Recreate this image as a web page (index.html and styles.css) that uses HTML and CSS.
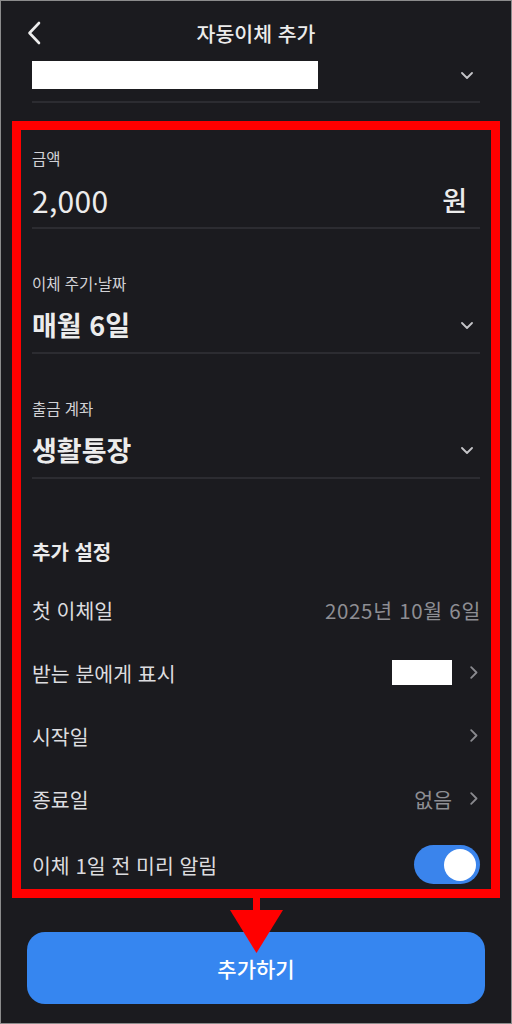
FILE: index.html
```html
<!DOCTYPE html>
<html lang="ko">
<head>
<meta charset="utf-8">
<title>자동이체 추가</title>
<link rel="stylesheet" href="styles.css">
</head>
<body>
<div class="screen">
  <header class="topbar">
    <svg class="back" viewBox="0 0 14 24" width="14" height="24"><path d="M12 2 L2.5 12 L12 22" fill="none" stroke="#ececec" stroke-width="2.6" stroke-linecap="round" stroke-linejoin="round"/></svg>
    <h1 class="title">자동이체 추가</h1>
    <span></span>
  </header>

  <div class="account">
    <div class="account-row">
      <span class="mask mask-wide"></span>
      <svg class="chev-down" viewBox="0 0 12 7" width="12" height="7"><path d="M1 1 L6 6 L11 1" fill="none" stroke="#c4c4c8" stroke-width="1.8" stroke-linecap="round" stroke-linejoin="round"/></svg>
    </div>
    <div class="divider"></div>
  </div>

  <section class="highlight">
    <div class="field field-first">
      <div class="label">금액</div>
      <div class="value-row">
        <span class="amount">2,000</span>
        <span class="unit">원</span>
      </div>
      <div class="divider"></div>
    </div>

    <div class="field">
      <div class="label">이체 주기·날짜</div>
      <div class="value-row">
        <span class="value">매월 6일</span>
        <svg class="chev-down" viewBox="0 0 12 7" width="12" height="7"><path d="M1 1 L6 6 L11 1" fill="none" stroke="#c4c4c8" stroke-width="1.8" stroke-linecap="round" stroke-linejoin="round"/></svg>
      </div>
      <div class="divider"></div>
    </div>

    <div class="field">
      <div class="label">출금 계좌</div>
      <div class="value-row">
        <span class="value">생활통장</span>
        <svg class="chev-down" viewBox="0 0 12 7" width="12" height="7"><path d="M1 1 L6 6 L11 1" fill="none" stroke="#c4c4c8" stroke-width="1.8" stroke-linecap="round" stroke-linejoin="round"/></svg>
      </div>
      <div class="divider"></div>
    </div>

    <h2 class="section-title">추가 설정</h2>

    <ul class="rows">
      <li class="row">
        <span class="row-label">첫 이체일</span>
        <span class="meta meta-date">2025년 10월 6일</span>
      </li>
      <li class="row">
        <span class="row-label">받는 분에게 표시</span>
        <span class="trail">
          <span class="mask mask-small"></span>
          <svg class="chev-right" viewBox="0 0 8 13" width="8" height="13"><path d="M1.2 1.2 L6.5 6.5 L1.2 11.8" fill="none" stroke="#8a8a8f" stroke-width="1.8" stroke-linecap="round" stroke-linejoin="round"/></svg>
        </span>
      </li>
      <li class="row">
        <span class="row-label">시작일</span>
        <span class="trail">
          <svg class="chev-right" viewBox="0 0 8 13" width="8" height="13"><path d="M1.2 1.2 L6.5 6.5 L1.2 11.8" fill="none" stroke="#8a8a8f" stroke-width="1.8" stroke-linecap="round" stroke-linejoin="round"/></svg>
        </span>
      </li>
      <li class="row">
        <span class="row-label">종료일</span>
        <span class="trail">
          <span class="meta">없음</span>
          <svg class="chev-right" viewBox="0 0 8 13" width="8" height="13"><path d="M1.2 1.2 L6.5 6.5 L1.2 11.8" fill="none" stroke="#8a8a8f" stroke-width="1.8" stroke-linecap="round" stroke-linejoin="round"/></svg>
        </span>
      </li>
      <li class="row row-toggle">
        <span class="row-label">이체 1일 전 미리 알림</span>
        <span class="toggle"><span class="knob"></span></span>
      </li>
    </ul>
  </section>

  <button class="primary" type="button">추가하기</button>

  <svg class="arrow" viewBox="0 0 58 60" width="58" height="60">
    <rect x="26" y="0" width="7" height="16" fill="#ff0000"/>
    <polygon points="3,14 56,14 29.5,57" fill="#ff0000"/>
  </svg>
</div>
</body>
</html>
```

FILE: styles.css
```css
* {
  box-sizing: border-box;
}

html, body {
  margin: 0;
  padding: 0;
  background: #1b1b1f;
}

body {
  font-family: "Noto Sans CJK KR", "Noto Sans", sans-serif;
  color: #ececec;
}

.screen {
  position: relative;
  width: 512px;
  height: 1024px;
  border: 1px solid #8c8c8c;
  background: #1b1b1f;
  overflow: hidden;
}

/* header */
.topbar {
  display: grid;
  grid-template-columns: 1fr auto 1fr;
  align-items: center;
  height: 55px;
  padding: 9px 0 0 0;
}

.back {
  display: block;
  margin-left: 26px;
}

.title {
  margin: 0;
  font-size: 20.5px;
  font-weight: 500;
  line-height: 46px;
  color: #ececec;
}

/* account selector */
.account {
  padding: 5px 31px 0 31px;
}

.account-row {
  display: flex;
  align-items: center;
  justify-content: space-between;
  height: 28px;
  padding-right: 7px;
}

.mask {
  display: block;
  background: #ffffff;
}

.mask-wide {
  width: 286px;
  height: 28px;
}

.mask-small {
  width: 60px;
  height: 25px;
}

.divider {
  height: 2px;
  background: #2c2c31;
}

.account .divider {
  margin-top: 12px;
}

/* highlighted block */
.highlight {
  margin: 18px 0 0 11px;
  width: 488px;
  border: 9px solid #ff0000;
  padding: 0 11px;
}

.field {
  padding-top: 45px;
}

.field-first {
  padding-top: 19px;
}

.label {
  font-size: 15.5px;
  line-height: 18px;
  color: #d2d2d6;
}

.value-row {
  display: flex;
  align-items: center;
  justify-content: space-between;
  height: 34px;
  margin-top: 16px;
  padding-right: 7px;
}

.amount {
  font-size: 30px;
  line-height: 34px;
  font-weight: 400;
  color: #ececec;
  letter-spacing: 0.3px;
}

.unit {
  font-size: 27px;
  line-height: 34px;
  font-weight: 500;
  color: #ececec;
  margin-right: 6px;
}

.value {
  font-size: 27px;
  line-height: 34px;
  font-weight: 700;
  color: #ececec;
}

.field .divider {
  margin-top: 10px;
}

.chev-down {
  display: block;
}

.section-title {
  margin: 61px 0 0 0;
  font-size: 20px;
  line-height: 24px;
  font-weight: 700;
  color: #ececec;
}

.rows {
  list-style: none;
  margin: 14px 0 0 0;
  padding: 0;
}

.row {
  display: flex;
  align-items: center;
  justify-content: space-between;
  height: 63px;
}

.row-toggle {
  height: 59px;
  padding-top: 10px;
}

.row-label {
  font-size: 20.5px;
  line-height: 26px;
  color: #dcdcdf;
}

.meta {
  font-size: 20.5px;
  line-height: 26px;
  color: #8e8e93;
}

.meta-date {
  letter-spacing: 0.7px;
  margin-right: -1px;
}

.trail {
  display: flex;
  align-items: center;
  gap: 18px;
  padding-right: 2px;
}

.chev-right {
  display: block;
}

.toggle {
  position: relative;
  display: block;
  width: 66px;
  height: 39px;
  border-radius: 20px;
  background: #3a84ec;
}

.knob {
  position: absolute;
  top: 3.5px;
  right: 4px;
  width: 32px;
  height: 32px;
  border-radius: 50%;
  background: #ffffff;
}

/* primary button */
.primary {
  display: block;
  margin: 34px 0 0 26px;
  width: 458px;
  height: 72px;
  border: none;
  border-radius: 18px;
  background: #3686f0;
  color: #ffffff;
  font-family: "Noto Sans CJK KR", "Noto Sans", sans-serif;
  font-size: 21px;
  font-weight: 500;
  padding: 0;
}

/* annotation arrow over the button */
.arrow {
  position: absolute;
  left: 226px;
  top: 895px;
}
```
